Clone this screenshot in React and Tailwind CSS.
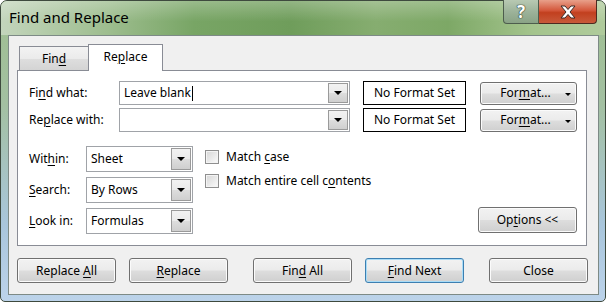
import React from 'react'

function U({ children }) {
  return <span className="underline underline-offset-[2px] decoration-[1px]">{children}</span>
}

function Tri({ small }) {
  return small
    ? <div className="w-0 h-0 border-l-[3px] border-r-[3px] border-t-[3px] border-l-transparent border-r-transparent border-t-black" />
    : <div className="w-0 h-0 border-l-[4px] border-r-[4px] border-t-[4px] border-l-transparent border-r-transparent border-t-black" />
}

const btnBg = 'bg-[linear-gradient(180deg,#f2f2f2_0%,#ebebeb_48%,#dddddd_52%,#cfcfcf_100%)]'

function Btn({ children, def, className = '' }) {
  return (
    <div className={`h-[25px] rounded-[3px] border ${def ? 'border-[#3c7fb1] shadow-[inset_0_0_0_1px_#a9dcf7]' : 'border-[#707070] shadow-[inset_0_0_0_1px_#fbfbfb]'} ${btnBg} flex items-center justify-center text-[12px] text-black ${className}`}>
      <span>{children}</span>
    </div>
  )
}

function ArrowBox({ className = '' }) {
  return (
    <div className={`w-[20px] border border-[#9a9a9a] ${btnBg} flex items-center justify-center ${className}`}>
      <Tri />
    </div>
  )
}

function Combo({ text }) {
  return (
    <div className="flex h-[26px] w-[107px] border border-[#a0a3a8] bg-white">
      <div className="flex-1 flex items-center pl-[4px] text-[12px] text-black">{text}</div>
      <ArrowBox className="my-px mr-px" />
    </div>
  )
}

function Check({ children }) {
  return (
    <div className="flex items-center gap-[7px] h-[16px] text-[12px] text-black">
      <div className="w-[14px] h-[14px] border border-[#8f8f8f] bg-[linear-gradient(135deg,#d6d6d6,#fbfbfb)] shadow-[inset_0_0_0_1px_#f4f4f4]" />
      <span>{children}</span>
    </div>
  )
}

function FormatBtn() {
  return (
    <div className={`ml-auto w-[97px] h-[23px] relative rounded-[3px] border border-[#707070] shadow-[inset_0_0_0_1px_#fbfbfb] ${btnBg} flex items-center justify-center text-[12px] text-black`}>
      <span className="mr-[6px]">For<U>m</U>at...</span>
      <div className="absolute right-[5px] top-[10px]"><Tri small /></div>
    </div>
  )
}

export default function App() {
  return (
    <div className="w-[606px] h-[302px] bg-white overflow-hidden font-['Noto_Sans',sans-serif]">
      <div className="relative w-[606px] h-[302px] rounded-t-[7px] rounded-b-[5px] border border-[#3e4a3e] bg-[linear-gradient(180deg,#9fbf90_0%,#a3c0a2_35%,#a9c6dc_75%,#bcd3ea_100%)] flex flex-col">
        {/* title bar */}
        <div className="h-[34px] rounded-t-[6px] bg-[linear-gradient(180deg,rgba(255,255,255,0.25),rgba(255,255,255,0)_60%),linear-gradient(90deg,#c3d5bc_0%,#9dbd8e_18%,#78a565_32%,#6f9d5b_48%,#86ad70_62%,#7da866_74%,#a4c48d_88%,#b0cb9c_100%)] flex items-center pl-[8px]">
          <span className="text-[15px] text-black leading-none -mt-[1px]">Find and Replace</span>
        </div>
        <div className="absolute top-[-1px] left-[502px] flex h-[24px]">
          <div className="w-[36px] h-full rounded-bl-[4px] border border-[#4d5d4d] border-t-0 bg-[linear-gradient(180deg,#b8c9b3_0%,#9db39a_50%,#8aa386_100%)] flex items-center justify-center">
            <span className="text-[17px] font-bold text-white leading-none [text-shadow:0_0_1px_#2a3a2a,0_0_1px_#2a3a2a,0_0_1px_#2a3a2a]">?</span>
          </div>
          <div className="w-[58px] h-full rounded-br-[4px] border border-[#4d2a20] border-t-0 border-l-0 bg-[linear-gradient(180deg,#e8a08a_0%,#d4583c_45%,#c2401f_55%,#c85a3a_100%)] flex items-center justify-center">
            <svg width="18" height="14" viewBox="0 0 18 14">
              <path d="M2 1h4l3 3.5L12 1h4l-5 6 5 6h-4l-3-3.5L6 13H2l5-6z" fill="#fff" stroke="#3b2a26" strokeWidth="1" strokeLinejoin="round" />
            </svg>
          </div>
        </div>

        {/* client area */}
        <div className="ml-[7px] w-[591px] h-[260px] border border-[#7d8a86] bg-[#f0f0f0] flex flex-col pl-[8px]">
          {/* tabs */}
          <div className="h-[34px] flex items-end pl-[2px]">
            <div className="w-[69px] h-[24px] border border-[#898c95] border-b-0 border-r-0 bg-[linear-gradient(180deg,#f3f3f3_0%,#ebebeb_50%,#dedede_52%,#d4d4d4_100%)] flex items-center justify-center text-[12px] text-black">
              <span>Fin<U>d</U></span>
            </div>
            <div className="relative z-10 -mb-px w-[75px] h-[27px] border border-[#898c95] border-b-0 bg-white flex items-center justify-center text-[12px] text-black pb-[2px]">
              <span>Re<U>p</U>lace</span>
            </div>
          </div>
          {/* panel */}
          <div className="w-[570px] h-[176px] border border-[#898c95] bg-white flex flex-col pl-[11px] pr-[9px] pt-[10px]">
            <div className="flex items-center h-[24px]">
              <div className="w-[90px] text-[12px] text-black">Fi<U>n</U>d what:</div>
              <div className="flex w-[231px] h-[24px] border border-[#a0a3a8] bg-white">
                <div className="flex-1 flex items-center pl-[4px] text-[12px] text-black">
                  <span>Leave blank</span><span className="w-px h-[15px] bg-black ml-[1px]" />
                </div>
                <ArrowBox className="my-px mr-px" />
              </div>
              <div className="ml-[13px] w-[103px] h-[24px] border border-black flex items-center justify-center text-[12px] text-black">No Format Set</div>
              <FormatBtn />
            </div>
            <div className="flex items-center h-[24px] mt-[3px]">
              <div className="w-[90px] text-[12px] text-black">Re<U>p</U>lace with:</div>
              <div className="flex w-[231px] h-[24px] border border-[#a0a3a8] bg-white">
                <div className="flex-1" />
                <ArrowBox className="my-px mr-px" />
              </div>
              <div className="ml-[13px] w-[103px] h-[24px] border border-black flex items-center justify-center text-[12px] text-black">No Format Set</div>
              <FormatBtn />
            </div>
            <div className="flex mt-[14px]">
              <div className="flex flex-col gap-[5px]">
                <div className="flex items-center">
                  <div className="w-[57px] text-[12px] text-black">Wit<U>h</U>in:</div>
                  <Combo text="Sheet" />
                </div>
                <div className="flex items-center">
                  <div className="w-[57px] text-[12px] text-black"><U>S</U>earch:</div>
                  <Combo text="By Rows" />
                </div>
                <div className="flex items-center">
                  <div className="w-[57px] text-[12px] text-black"><U>L</U>ook in:</div>
                  <Combo text="Formulas" />
                </div>
              </div>
              <div className="ml-[12px] pt-[3px] flex flex-col gap-[8px]">
                <Check>Match <U>c</U>ase</Check>
                <Check>Match entire cell c<U>o</U>ntents</Check>
              </div>
              <div className="ml-auto flex flex-col justify-end pb-[1px]">
                <Btn className="w-[99px] h-[26px]">Op<U>t</U>ions &lt;&lt;</Btn>
              </div>
            </div>
          </div>
          {/* bottom buttons */}
          <div className="flex mt-[12px]">
            <Btn className="w-[99px]">Replace <U>A</U>ll</Btn>
            <Btn className="w-[99px] ml-[13px]"><U>R</U>eplace</Btn>
            <Btn className="w-[99px] ml-[25px]">Fin<U>d</U> All</Btn>
            <Btn def className="w-[99px] ml-[13px]"><U>F</U>ind Next</Btn>
            <Btn className="w-[99px] ml-[25px]">Close</Btn>
          </div>
        </div>
      </div>
    </div>
  )
}
